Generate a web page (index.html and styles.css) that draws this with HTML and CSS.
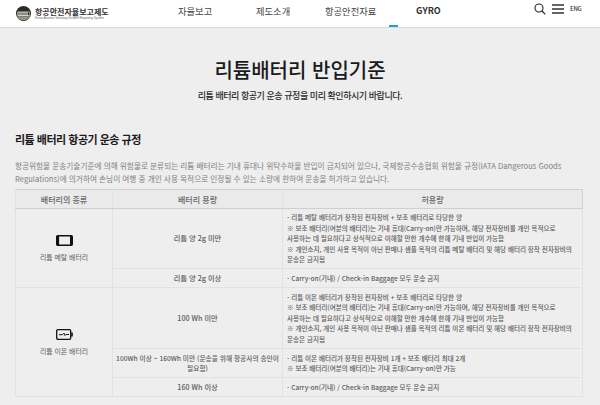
FILE: index.html
```html
<!DOCTYPE html>
<html lang="ko">
<head>
<meta charset="utf-8">
<title>리튬배터리 반입기준</title>
<link rel="stylesheet" href="styles.css">
</head>
<body>
<header class="site-header">
  <div class="brand">
    <svg class="brand-mark" viewBox="0 0 15 15" width="15" height="15" aria-hidden="true">
      <circle cx="7.5" cy="7.5" r="7.5" fill="#2c2a28"/>
      <path d="M1 10.5a7.5 7.5 0 0 0 13 0z" fill="#9a9388"/>
      <rect x="1.5" y="5.6" width="12" height="4.6" fill="#f4f1e6"/>
      <path d="M3 6.3v3M5 6.3v3M7 6.3v3M9 6.3v3M11 6.3v3M12.5 6.3v3" stroke="#2c2a28" stroke-width="1"/>
    </svg>
    <div class="brand-text">
      <span class="brand-ko">항공안전자율보고제도</span>
      <span class="brand-en">Korea Aviation Voluntary Incident Reporting System</span>
    </div>
  </div>
  <nav class="nav">
    <a class="nav-item nav-1">자율보고</a>
    <a class="nav-item nav-2">제도소개</a>
    <a class="nav-item nav-3">항공안전자료</a>
    <a class="nav-item nav-4 nav-gyro">GYRO</a>
  </nav>
  <div class="tools">
    <svg viewBox="0 0 12 12" width="12" height="12" aria-hidden="true"><circle cx="5" cy="5" r="4" fill="none" stroke="#222" stroke-width="1.1"/><path d="M8 8l3.3 3.3" stroke="#222" stroke-width="1.2"/></svg>
    <svg viewBox="0 0 12 10" width="12" height="10" aria-hidden="true"><path d="M0 1h12M0 5h12M0 9h12" stroke="#333" stroke-width="1.3"/></svg>
    <span class="lang">ENG</span>
  </div>
</header>
<main class="page">
  <div class="hero">
    <h1>리튬배터리 반입기준</h1>
    <p>리튬 배터리 항공기 운송 규정을 미리 확인하시기 바랍니다.</p>
  </div>
  <section class="rules">
    <h2>리튬 배터리 항공기 운송 규정</h2>
    <p class="intro">항공위험물 운송기술기준에 의해 위험물로 분류되는 리튬 배터리는 기내 휴대나 위탁수하물 반입이 금지되어 있으나, 국제항공수송협회 위험물 규정(IATA Dangerous Goods Regulations)에 의거하여 손님이 여행 중 개인 사용 목적으로 인정될 수 있는 소량에 한하여 운송을 허가하고 있습니다.</p>
    <table class="limits">
      <colgroup><col class="c1"><col class="c2"><col class="c3"></colgroup>
      <thead>
        <tr><th>배터리의 종류</th><th>배터리 용량</th><th>허용량</th></tr>
      </thead>
      <tbody>
        <tr class="r1">
          <td rowspan="2" class="kind">
            <svg viewBox="0 0 17 11" width="17" height="11" aria-hidden="true"><rect x=".7" y=".7" width="15.6" height="9.6" rx="1.2" fill="none" stroke="#111" stroke-width="1.4"/><rect x=".7" y=".7" width="2.4" height="9.6" fill="#111"/><rect x="14" y=".7" width="2.4" height="9.6" fill="#111"/></svg>
            <span>리튬 메탈 배터리</span>
          </td>
          <td class="cap">리튬 양 2g 미만</td>
          <td class="allow">- 리튬 메탈 배터리가 장착된 전자장비 + 보조 배터리로 타당한 양<br>※ 보조 배터리(여분의 배터리)는 기내 휴대(Carry-on)만 가능하며, 해당 전자장비를 개인 목적으로<br>사용하는 데 필요하다고 상식적으로 이해할 만한 개수에 한해 기내 반입이 가능함<br>※ 개인소지, 개인 사용 목적이 아닌 판매나 샘플 목적의 리튬 메탈 배터리 및 해당 배터리 장착 전자장비의<br>운송은 금지됨</td>
        </tr>
        <tr class="r2">
          <td class="cap">리튬 양 2g 이상</td>
          <td class="allow">- Carry-on(기내) / Check-in Baggage 모두 운송 금지</td>
        </tr>
        <tr class="r3">
          <td rowspan="3" class="kind">
            <svg viewBox="0 0 17 11" width="17" height="11" aria-hidden="true"><rect x=".7" y=".7" width="14" height="9.6" rx="1.2" fill="none" stroke="#111" stroke-width="1.3"/><rect x="15.2" y="3.5" width="1.6" height="4" fill="#111"/><path d="M3 5.7h3.5l1.5-1.6 1 2.4 1-1h3" fill="none" stroke="#111" stroke-width="1"/></svg>
            <span>리튬 이온 배터리</span>
          </td>
          <td class="cap">100 Wh 미만</td>
          <td class="allow">- 리튬 이온 배터리가 장착된 전자장비 + 보조 배터리로 타당한 양<br>※ 보조 배터리(여분의 배터리)는 기내 휴대(Carry-on)만 가능하며, 해당 전자장비를 개인 목적으로<br>사용하는 데 필요하다고 상식적으로 이해할 만한 개수에 한해 기내 반입이 가능함<br>※ 개인소지, 개인 사용 목적이 아닌 판매나 샘플 목적의 리튬 이온 배터리 및 해당 배터리 장착 전자장비의<br>운송은 금지됨</td>
        </tr>
        <tr class="r4">
          <td class="cap cap-long">100Wh 이상 ~ 160Wh 미만 (운송을 위해 항공사의 승인이 필요함)</td>
          <td class="allow">- 리튬 이온 배터리가 장착된 전자장비 1개 + 보조 배터리 최대 2개<br>※ 보조 배터리(여분의 배터리)는 기내 휴대(Carry-on)만 가능</td>
        </tr>
        <tr class="r5">
          <td class="cap">160 Wh 이상</td>
          <td class="allow">- Carry-on(기내) / Check-in Baggage 모두 운송 금지</td>
        </tr>
      </tbody>
    </table>
  </section>
</main>
</body>
</html>
```

FILE: styles.css
```css
* { box-sizing: border-box; }
html, body { margin: 0; padding: 0; }
body {
  width: 600px;
  height: 405px;
  overflow: hidden;
  background: #eeeeee;
  font-family: "Noto Sans CJK KR", "Noto Sans", sans-serif;
  color: #222;
}
.site-header {
  display: flex;
  align-items: center;
  height: 28px;
  padding-left: 16px;
  background: #fff;
  border-bottom: 1px solid #dcdcdc;
}
.brand { display: flex; align-items: center; gap: 4px; width: 162px; }
.brand-text { display: flex; flex-direction: column; line-height: 1; }
.brand-ko { font-size: 8px; font-weight: 700; color: #333; line-height: 9px; white-space: nowrap; }
.brand-en { font-family: "Liberation Sans", sans-serif; font-size: 3px; line-height: 4px; color: #666; white-space: nowrap; }
.nav { display: flex; align-items: center; height: 27px; position: relative; }
.nav-item { font-size: 9.3px; color: #444; line-height: 22px; padding-bottom: 5px; white-space: nowrap; }
.nav-1 { width: 78px; }
.nav-2 { width: 69px; }
.nav-3 { width: 91px; }
.nav-gyro { font-weight: 700; font-size: 9px; color: #333; position: relative; }
.nav-gyro::before {
  content: "";
  position: absolute;
  left: -27px;
  bottom: 0;
  width: 9px;
  height: 2px;
  background: #18a5cf;
}
.nav-4 { width: 118px; }
.tools { display: flex; align-items: center; gap: 6px; padding-bottom: 10px; }
.lang { font-size: 6px; color: #333; font-weight: 500; letter-spacing: -.2px; }
.hero { text-align: center; padding-top: 28px; }
.hero h1 { margin: 0; font-size: 20px; font-weight: 500; line-height: 28px; color: #1b1b1b; }
.hero p { margin: 5px 0 0; font-size: 9px; line-height: 13px; font-weight: 500; color: #2b2b2b; letter-spacing: -.45px; }
.rules { padding: 0 15px; margin-top: 29px; }
.rules h2 { margin: 0; font-size: 11px; line-height: 16px; font-weight: 700; color: #1b1b1b; letter-spacing: -.5px; }
.intro { margin: 12px 0 0; width: 568px; font-size: 7.65px; line-height: 13px; color: #808080; }
.limits {
  width: 568px;
  margin-top: 4px;
  table-layout: fixed;
  border-collapse: collapse;
  font-size: 6.55px;
  color: #5c5c5c;
  border: 1px solid #d0d0d0;
}
.c1 { width: 97px; }
.c2 { width: 170px; }
th {
  height: 19px;
  padding: 0;
  font-weight: 500;
  font-size: 8px;
  color: #666;
  background: #eaeaea;
  border-left: 1px solid #e2e2e2;
  border-bottom: 1px solid #cfcfcf;
}
td { padding: 0; border: 1px solid #e2e2e2; }
.kind { text-align: center; font-size: 6.9px; }
.kind svg { display: block; margin: 0 auto 6px; }
.kind span { display: block; }
.cap { text-align: center; padding: 0 3px; line-height: 10.5px; font-weight: 500; font-size: 7.2px; }
.cap-long { font-size: 6.7px; }
.allow { padding: 2px 4px; line-height: 10.5px; font-weight: 500; white-space: nowrap; }
.r1 td, .r3 td { height: 60px; }
.r3 td { height: 61px; }
.r2 td, .r5 td { height: 19px; }
.r4 td { height: 29px; }
```
